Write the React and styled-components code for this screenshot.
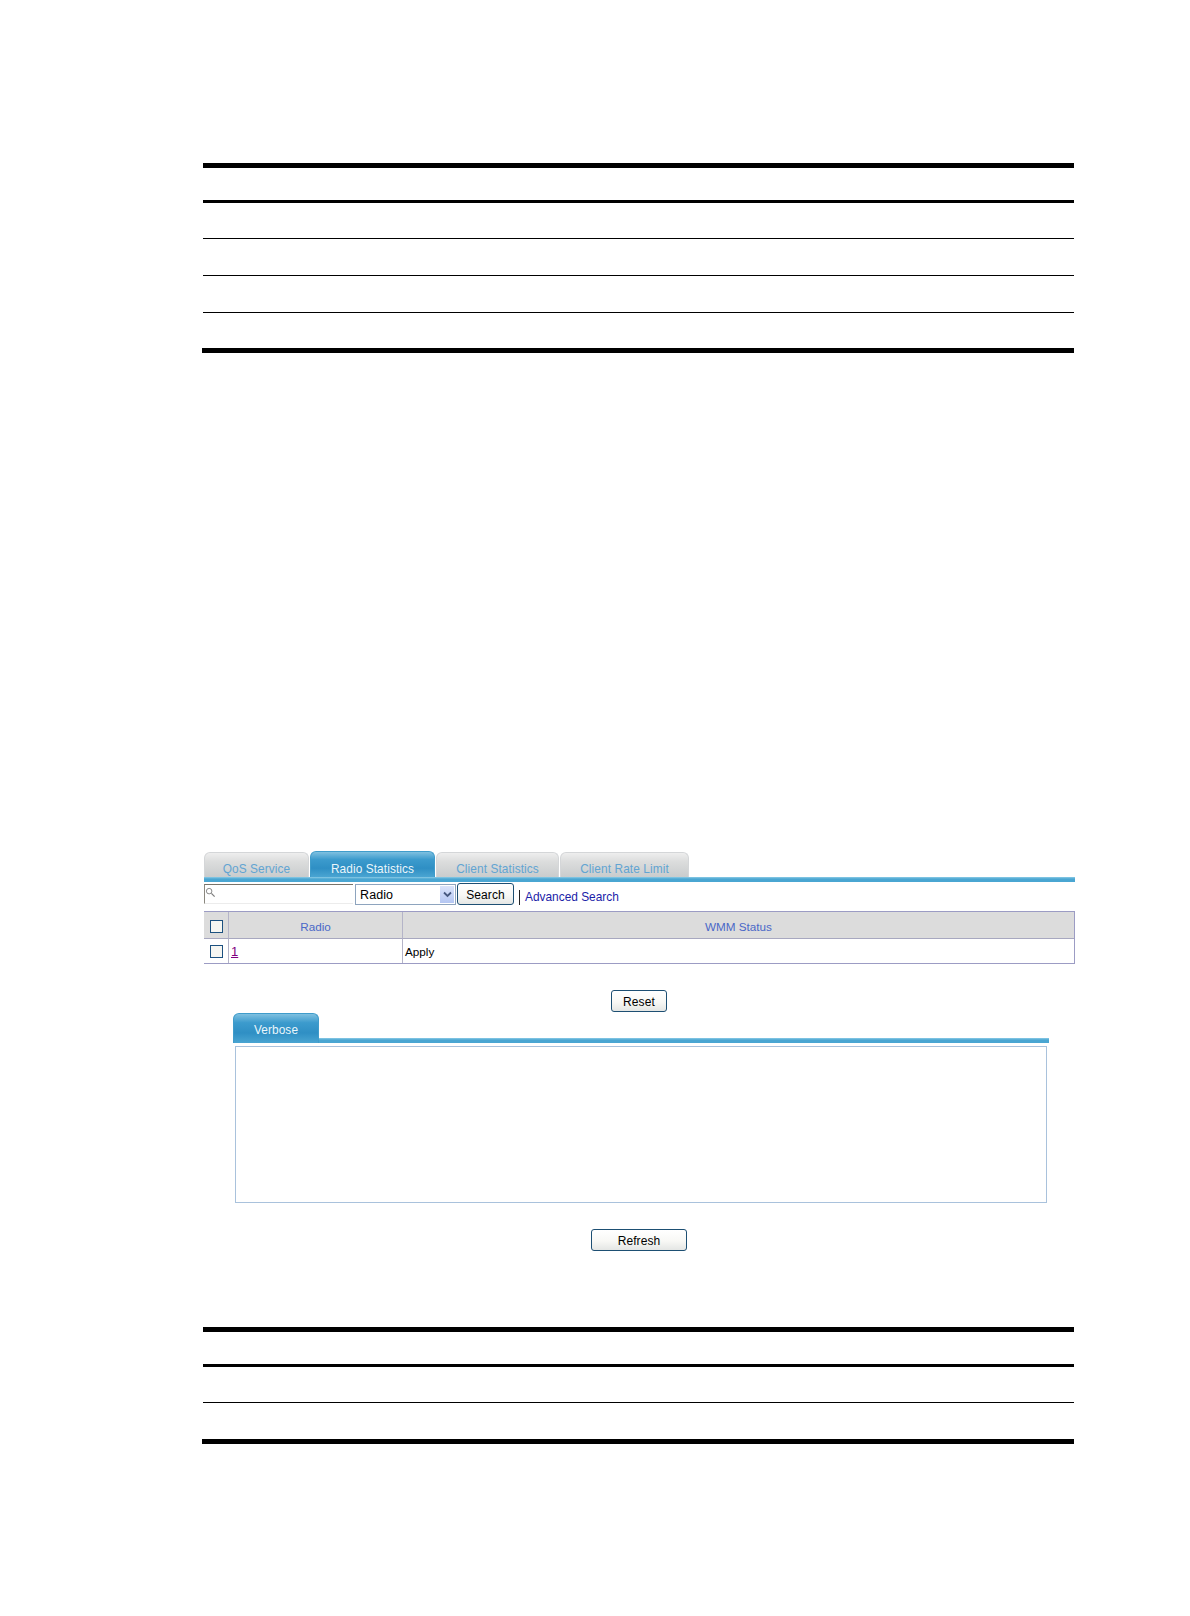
import React from "react";
import styled, { createGlobalStyle } from "styled-components";

const Global = createGlobalStyle`
  html, body { margin: 0; padding: 0; background: #fff; }
  body { font-family: "Liberation Sans", Arial, sans-serif; font-size: 12px; color: #000; }
`;

const Page = styled.div`
  width: 1190px;
  height: 1616px;
  padding-top: 163px;
  box-sizing: border-box;
  overflow: hidden;
`;

const RuleTable = styled.div`
  margin-left: 203px;
  width: 871px;
  margin-top: ${(p) => p.$top || 0}px;
  border-top: 5px solid #000;
  border-bottom: 5px solid #000;
  position: relative;
  &::after {
    content: "";
    position: absolute;
    left: -1px;
    bottom: -5px;
    width: 1px;
    height: 5px;
    background: #000;
  }
`;

const Row = styled.div`
  height: ${(p) => p.$h}px;
  border-top: ${(p) => p.$line || 0}px solid #000;
`;

const Figure = styled.div`
  margin: ${(p) => p.$top}px 0 0 204px;
  width: 871px;
`;

const TabStrip = styled.div`
  display: flex;
  align-items: flex-end;
  height: 26px;
  gap: 1px;
`;

const Tab = styled.div`
  width: ${(p) => p.$w}px;
  height: ${(p) => (p.$active ? 26 : 25)}px;
  box-sizing: border-box;
  border-radius: 6px 6px 0 0;
  display: flex;
  align-items: center;
  justify-content: center;
  padding-top: 8px;
  font-size: 11.85px;
  letter-spacing: 0.1px;
  color: ${(p) => (p.$active ? "#eaf6fb" : "#62a4d2")};
  border: 1px solid ${(p) => (p.$active ? "#3f9ccb" : "#d4d6d8")};
  border-bottom: 0;
  background: ${(p) =>
    p.$active
      ? "linear-gradient(#7fc0e0 0, #3c9bcd 30%, #2f8fc4 65%, #4aa5d2 100%)"
      : "linear-gradient(#eeeeee 0, #dcdddd 35%, #c9cccd 100%)"};
`;

const TabLine = styled.div`
  height: 5px;
  background: linear-gradient(#8ccbe6 0, #4aa6d2 40%, #4aa6d2 100%);
`;

const Toolbar = styled.div`
  display: flex;
  align-items: flex-start;
  height: 28px;
  padding-top: 1px;
`;

const SearchBox = styled.div`
  width: 149px;
  height: 20px;
  margin-top: 1px;
  box-sizing: border-box;
  border-top: 1px solid #77736a;
  border-left: 1px solid #8b887f;
  border-bottom: 1px solid #ececec;
  display: flex;
  padding-top: 2px;
  color: #7e7e7e;
`;

const SelectBox = styled.div`
  width: 101px;
  height: 21px;
  margin: 1px 0 0 2px;
  box-sizing: border-box;
  border: 1px solid #8ea4be;
  display: flex;
  align-items: center;
  justify-content: space-between;
  padding: 0 1px 0 4px;
  font-size: 12.5px;
  letter-spacing: 0.1px;
`;

const SelectArrow = styled.span`
  width: 14px;
  height: 17px;
  background: linear-gradient(#dbe4fb, #b4c6f2);
  color: #46587f;
  display: flex;
  align-items: center;
  justify-content: center;
`;

const Button = styled.button`
  display: block;
  width: ${(p) => p.$w}px;
  height: 22px;
  margin: ${(p) => p.$margin || 0};
  padding: 2px 0 0;
  box-sizing: border-box;
  border: 1px solid #1d4f73;
  border-radius: 3px;
  background: linear-gradient(#ffffff 0, #f8f8f5 55%, #e4e6e4 100%);
  font-family: "Liberation Sans", Arial, sans-serif;
  font-size: 12px;
  letter-spacing: 0.1px;
  color: #000;
`;

const Divider = styled.span`
  width: 1px;
  height: 15px;
  background: #222;
  margin: 7px 5px 0 5px;
`;

const AdvancedLink = styled.a`
  color: #1b22a8;
  font-size: 11.9px;
  margin-top: 7px;
  line-height: 15px;
`;

const Grid = styled.div`
  width: 871px;
  box-sizing: border-box;
  border: 1px solid #9c9cc4;
  border-left: 0;
  display: grid;
  grid-template-columns: 24px 174px 1fr;
  grid-template-rows: 27px 24px;
`;

const Cell = styled.div`
  display: flex;
  align-items: center;
  justify-content: ${(p) => (p.$head || p.$box ? "center" : "flex-start")};
  padding-left: ${(p) => (p.$head || p.$box ? 0 : 2)}px;
  padding-top: ${(p) => (p.$head ? 3 : 0)}px;
  background: ${(p) => (p.$head ? "#dcdcdc" : "#fff")};
  border-left: ${(p) => (p.$first ? "0" : "1px solid #b4b4c8")};
  border-bottom: ${(p) => (p.$head ? "1px solid #a8a8c0" : "0")};
  color: ${(p) => (p.$head ? "#4a68c8" : "#000")};
  font-size: 11.7px;
  box-sizing: border-box;
`;

const Check = styled.span`
  width: 13px;
  height: 13px;
  box-sizing: border-box;
  border: 1px solid #1c5180;
  background: #f6f6f2;
`;

const NumLink = styled.a`
  color: #800080;
  font-size: 13px;
  text-decoration: underline;
`;

const Detail = styled.div`
  margin: 1px 0 0 29px;
  width: 816px;
`;

const VerboseTabs = styled.div`
  display: flex;
  align-items: flex-end;
  height: 30px;
`;

const VerboseTab = styled(Tab)`
  height: 30px;
  flex: none;
  padding-top: 3px;
`;

const VerboseLine = styled(TabLine)`
  flex: 1;
`;

const VerboseBox = styled.div`
  width: 812px;
  height: 157px;
  margin: 3px 0 0 2px;
  box-sizing: border-box;
  border: 1px solid #a9c2dc;
`;

function Magnifier() {
  return (
    <svg width="11" height="11" viewBox="0 0 12 12" fill="none" stroke="currentColor">
      <circle cx="4.5" cy="4.5" r="3" />
      <path d="M7 7l3.5 3.5" strokeWidth="1.4" />
    </svg>
  );
}

function Chevron() {
  return (
    <svg width="9" height="7" viewBox="0 0 9 7" fill="none" stroke="currentColor" strokeWidth="1.8">
      <path d="M1 1.5l3.5 3.5L8 1.5" />
    </svg>
  );
}

export default function App() {
  return (
    <Page>
      <Global />
      <RuleTable>
        <Row $h={32} />
        <Row $h={35} $line={3} />
        <Row $h={36} $line={1} />
        <Row $h={36} $line={1} />
        <Row $h={35} $line={1} />
      </RuleTable>

      <Figure $top={498}>
        <TabStrip>
          <Tab $w={105}>QoS Service</Tab>
          <Tab $w={125} $active>Radio Statistics</Tab>
          <Tab $w={123}>Client Statistics</Tab>
          <Tab $w={129}>Client Rate Limit</Tab>
        </TabStrip>
        <TabLine />
        <Toolbar>
          <SearchBox><Magnifier /></SearchBox>
          <SelectBox>
            Radio
            <SelectArrow><Chevron /></SelectArrow>
          </SelectBox>
          <Button $w={57} $margin="0 0 0 1px">Search</Button>
          <Divider />
          <AdvancedLink>Advanced Search</AdvancedLink>
        </Toolbar>
        <Grid>
          <Cell $head $first><Check /></Cell>
          <Cell $head>Radio</Cell>
          <Cell $head>WMM Status</Cell>
          <Cell $box $first><Check /></Cell>
          <Cell><NumLink>1</NumLink></Cell>
          <Cell>Apply</Cell>
        </Grid>
        <Button $w={56} $margin="26px 0 0 407px">Reset</Button>
        <Detail>
          <VerboseTabs>
            <VerboseTab $w={86} $active>Verbose</VerboseTab>
            <VerboseLine />
          </VerboseTabs>
          <VerboseBox />
        </Detail>
        <Button $w={96} $margin="26px 0 0 387px">Refresh</Button>
      </Figure>

      <RuleTable $top={76}>
        <Row $h={32} />
        <Row $h={35} $line={3} />
        <Row $h={36} $line={1} />
      </RuleTable>
    </Page>
  );
}
